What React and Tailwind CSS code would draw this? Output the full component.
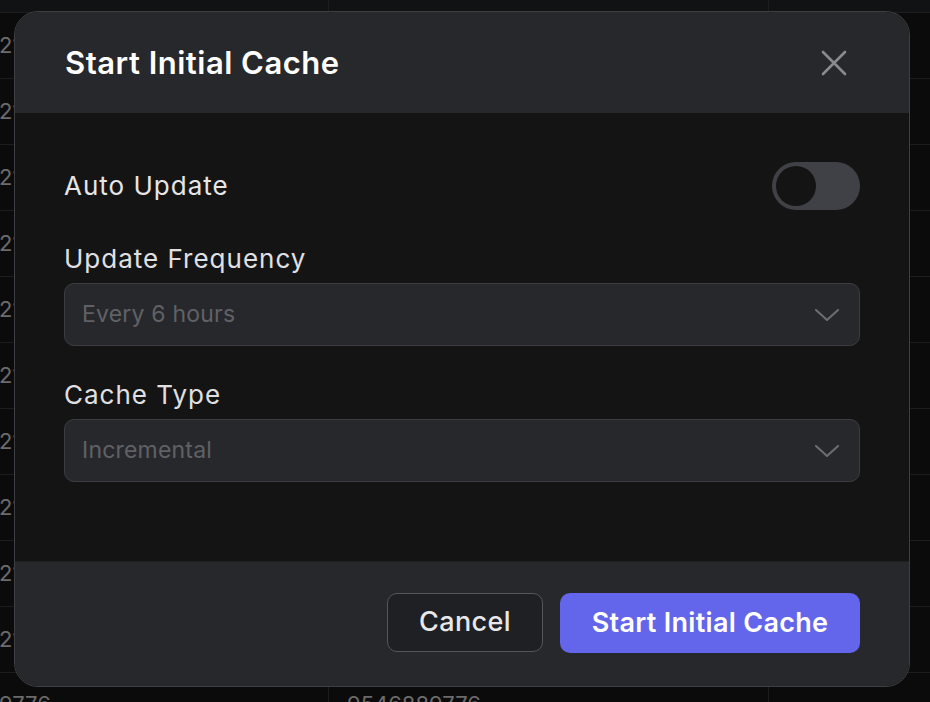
import React from "react";

const rows = Array.from({ length: 10 });

function Chevron() {
  return (
    <svg width="26" height="16" viewBox="0 0 26 16" fill="none">
      <path d="M2 3 L13 13 L24 3" stroke="#6b6b70" strokeWidth="2.2" strokeLinecap="round" strokeLinejoin="round" />
    </svg>
  );
}

function Select({ value }) {
  return (
    <div className="flex h-[63px] w-full items-center justify-between rounded-[10px] border border-[#3c3d42] bg-[#27282b] pl-[17px] pr-[19px]">
      <span className="text-[23px] tracking-[0.2px] text-[#606166]">{value}</span>
      <Chevron />
    </div>
  );
}

export default function App() {
  return (
    <div className="relative h-[702px] w-[930px] overflow-hidden bg-[#0b0b0b]" style={{ fontFamily: "Inter, 'Noto Sans', sans-serif" }}>
      {/* background table */}
      <div className="flex flex-col">
        <div className="grid h-[13px] grid-cols-[329px_440px_161px] border-b border-[#1c1d1f] bg-[#111213]">
          <div className="border-r border-[#1c1d1f]" />
          <div className="border-r border-[#1c1d1f]" />
          <div />
        </div>
        {rows.map((_, i) => (
          <div key={i} className="grid h-[66px] grid-cols-[329px_440px_161px] border-b border-[#1c1d1f]">
            <div className="flex items-center border-r border-[#1c1d1f] text-[22px] text-[#6b6b6b]">
              <span className="-ml-[1px]">21</span>
            </div>
            <div className="border-r border-[#1c1d1f]" />
            <div />
          </div>
        ))}
        <div className="grid h-[66px] grid-cols-[329px_440px_161px]">
          <div className="flex items-start overflow-hidden border-r border-[#1c1d1f] pt-[15px] text-[22px] text-[#6b6b6b]">
            <span className="-ml-[1px]">9776</span>
          </div>
          <div className="flex items-start border-r border-[#1c1d1f] pl-[18px] pt-[15px] text-[22px] text-[#6b6b6b]">9546889776</div>
          <div />
        </div>
      </div>

      {/* modal */}
      <div className="absolute left-[14px] top-[11px] flex h-[676px] w-[896px] flex-col overflow-hidden rounded-[24px] border border-[#3e3f44] bg-[#141414]">
        <div className="flex h-[101px] shrink-0 items-center justify-between bg-[#27282b] pl-[50px] pr-[62px]">
          <h2 className="text-[31px] font-semibold leading-[38px] tracking-[0.5px] text-white">Start Initial Cache</h2>
          <svg width="26" height="26" viewBox="0 0 26 26" fill="none">
            <path d="M2 2 L24 24 M24 2 L2 24" stroke="#8a8a8f" strokeWidth="2.6" strokeLinecap="round" />
          </svg>
        </div>
        <div className="flex flex-1 flex-col bg-[#141414] px-[49px] pt-[49px]">
          <div className="flex h-[48px] items-center justify-between">
            <span className="text-[26px] leading-[32px] tracking-[1px] text-[#e6e6e8]">Auto Update</span>
            <div className="flex h-[48px] w-[88px] items-center rounded-full bg-[#404146] px-[4px]">
              <div className="h-[40px] w-[40px] rounded-full bg-[#141414]" />
            </div>
          </div>
          <div className="mt-[33px] flex flex-col">
            <span className="mb-[8px] text-[26px] leading-[32px] tracking-[1px] text-[#e0e0e2]">Update Frequency</span>
            <Select value="Every 6 hours" />
          </div>
          <div className="mt-[33px] flex flex-col">
            <span className="mb-[8px] text-[26px] leading-[32px] tracking-[1px] text-[#e0e0e2]">Cache Type</span>
            <Select value="Incremental" />
          </div>
        </div>
        <div className="flex h-[125px] shrink-0 items-start justify-end gap-[17px] border-t border-[#1f2022] bg-[#27282b] pr-[49px] pt-[31px]">
          <button className="flex h-[59px] w-[156px] items-center justify-center rounded-[10px] border border-[#55565b] bg-[#1f2023] text-[27px] font-medium tracking-[0.4px] text-[#e8e8ea]">
            Cancel
          </button>
          <button className="flex h-[60px] w-[300px] items-center justify-center rounded-[10px] bg-[#6366ea] text-[27px] font-semibold tracking-[0.3px] text-white">
            Start Initial Cache
          </button>
        </div>
      </div>
    </div>
  );
}
